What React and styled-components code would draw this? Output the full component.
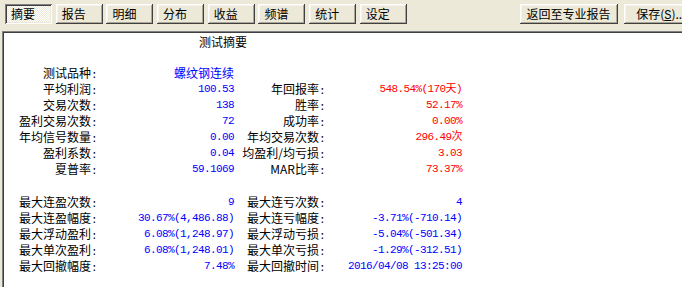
import React from "react";
import styled, { createGlobalStyle, css } from "styled-components";

const Global = createGlobalStyle`
  html, body { margin: 0; padding: 0; }
  body {
    background: #ECE9D8;
    font-family: "Noto Sans CJK SC", "Liberation Sans", sans-serif;
    font-size: 12px;
    overflow: hidden;
  }
`;

const Page = styled.div`
  width: 682px;
  height: 287px;
  display: flex;
  flex-direction: column;
  background: #ECE9D8;
`;

const Toolbar = styled.div`
  height: 31px;
  flex: none;
  display: flex;
  align-items: flex-start;
  padding: 4px 0 0 5px;
  box-sizing: border-box;
  gap: 3.7px;
`;

const Button = styled.button`
  flex: none;
  height: 20px;
  width: ${(p) => p.$w || 47}px;
  padding: 0 0 0 ${(p) => p.$pl ?? 6}px;
  margin-left: ${(p) => p.$ml || 0}px;
  border: none;
  font-family: "Noto Sans CJK SC", sans-serif;
  font-size: 12px;
  line-height: 20px;
  color: #000;
  text-align: ${(p) => (p.$center ? "center" : "left")};
  white-space: nowrap;
  overflow: hidden;
  background: #ECE9D8;
  box-shadow: inset -1px -1px #404040, inset 1px 1px #ffffff,
    inset -2px -2px #aca899, inset 2px 2px #f4f3ec;
  ${(p) =>
    p.$active &&
    css`
      background: repeating-conic-gradient(#ffffff 0 25%, #ECE9D8 0 50%) 0 0 / 2px 2px;
      box-shadow: inset 1px 1px #808080, inset -1px -1px #ffffff,
        inset 2px 2px #404040, inset -2px -2px #ECE9D8;
    `}
`;

const Mn = styled.span`
  text-decoration: underline;
  font-family: "Liberation Mono", monospace;
`;

const Panel = styled.div`
  flex: 1;
  margin-left: 2px;
  background: #fff;
  border-top: 1px solid #808080;
  border-left: 1px solid #808080;
  box-shadow: inset 1px 1px #404040;
  padding: 2px 0 0 3px;
`;

const Title = styled.div`
  margin-left: 193px;
  line-height: 16px;
  height: 16px;
`;

const Grid = styled.div`
  display: grid;
  grid-template-columns: 91px 137px 91px 137px;
  grid-auto-rows: 16px;
  margin-top: ${(p) => p.$mt}px;
`;

const Label = styled.div`
  text-align: right;
  line-height: 16px;
  white-space: nowrap;
  color: #000;
  font-family: "Noto Sans CJK SC", sans-serif;
`;

const Colon = styled.span`
  font-family: "Liberation Mono", monospace;
  font-size: 11px;
  letter-spacing: -0.6px;
`;

const Value = styled.div`
  text-align: right;
  line-height: 16px;
  white-space: nowrap;
  color: ${(p) => (p.$red ? "#ff0000" : "#0000ff")};
  font-family: ${(p) =>
    p.$cjk ? `"Noto Sans CJK SC", sans-serif` : `"Liberation Mono", "Noto Sans CJK SC", monospace`};
  font-size: ${(p) => (p.$cjk ? 12 : 11)}px;
  letter-spacing: ${(p) => (p.$cjk ? 0 : -0.6)}px;
`;

const tabs = ["摘要", "报告", "明细", "分布", "收益", "频谱", "统计", "设定"];

const sec1 = [
  ["测试品种", "螺纹钢连续", null, null, true],
  ["平均利润", "100.53", "年回报率", "548.54%(170天)"],
  ["交易次数", "138", "胜率", "52.17%"],
  ["盈利交易次数", "72", "成功率", "0.00%"],
  ["年均信号数量", "0.00", "年均交易次数", "296.49次"],
  ["盈利系数", "0.04", "均盈利/均亏损", "3.03"],
  ["夏普率", "59.1069", "MAR比率", "73.37%"],
];

const sec2 = [
  ["最大连盈次数", "9", "最大连亏次数", "4"],
  ["最大连盈幅度", "30.67%(4,486.88)", "最大连亏幅度", "-3.71%(-710.14)"],
  ["最大浮动盈利", "6.08%(1,248.97)", "最大浮动亏损", "-5.04%(-501.34)"],
  ["最大单次盈利", "6.08%(1,248.01)", "最大单次亏损", "-1.29%(-312.51)"],
  ["最大回撤幅度", "7.48%", "最大回撤时间", "2016/04/08 13:25:00"],
];

const L = ({ children }) => (
  <Label>
    {children}
    <Colon>:</Colon>
  </Label>
);

const rows = (data, red) =>
  data.map(([a, b, c, d, cjk], i) => (
    <React.Fragment key={i}>
      <L>{a}</L>
      <Value $cjk={cjk}>{b}</Value>
      {c ? <L>{c}</L> : <div />}
      {d ? <Value $red={red}>{d}</Value> : <div />}
    </React.Fragment>
  ));

export default function App() {
  return (
    <Page>
      <Global />
      <Toolbar>
        {tabs.map((t, i) => (
          <Button key={t} $active={i === 0} $w={47}>
            {t}
          </Button>
        ))}
        <Button $center $pl={0} $w={98} $ml={109}>
          返回至专业报告
        </Button>
        <Button $w={80} $ml={3} $pl={12}>
          保存(<Mn>S</Mn>)...
        </Button>
      </Toolbar>
      <Panel>
        <Title>测试摘要</Title>
        <Grid $mt={15}>{rows(sec1, true)}</Grid>
        <Grid $mt={17}>{rows(sec2, false)}</Grid>
      </Panel>
    </Page>
  );
}
